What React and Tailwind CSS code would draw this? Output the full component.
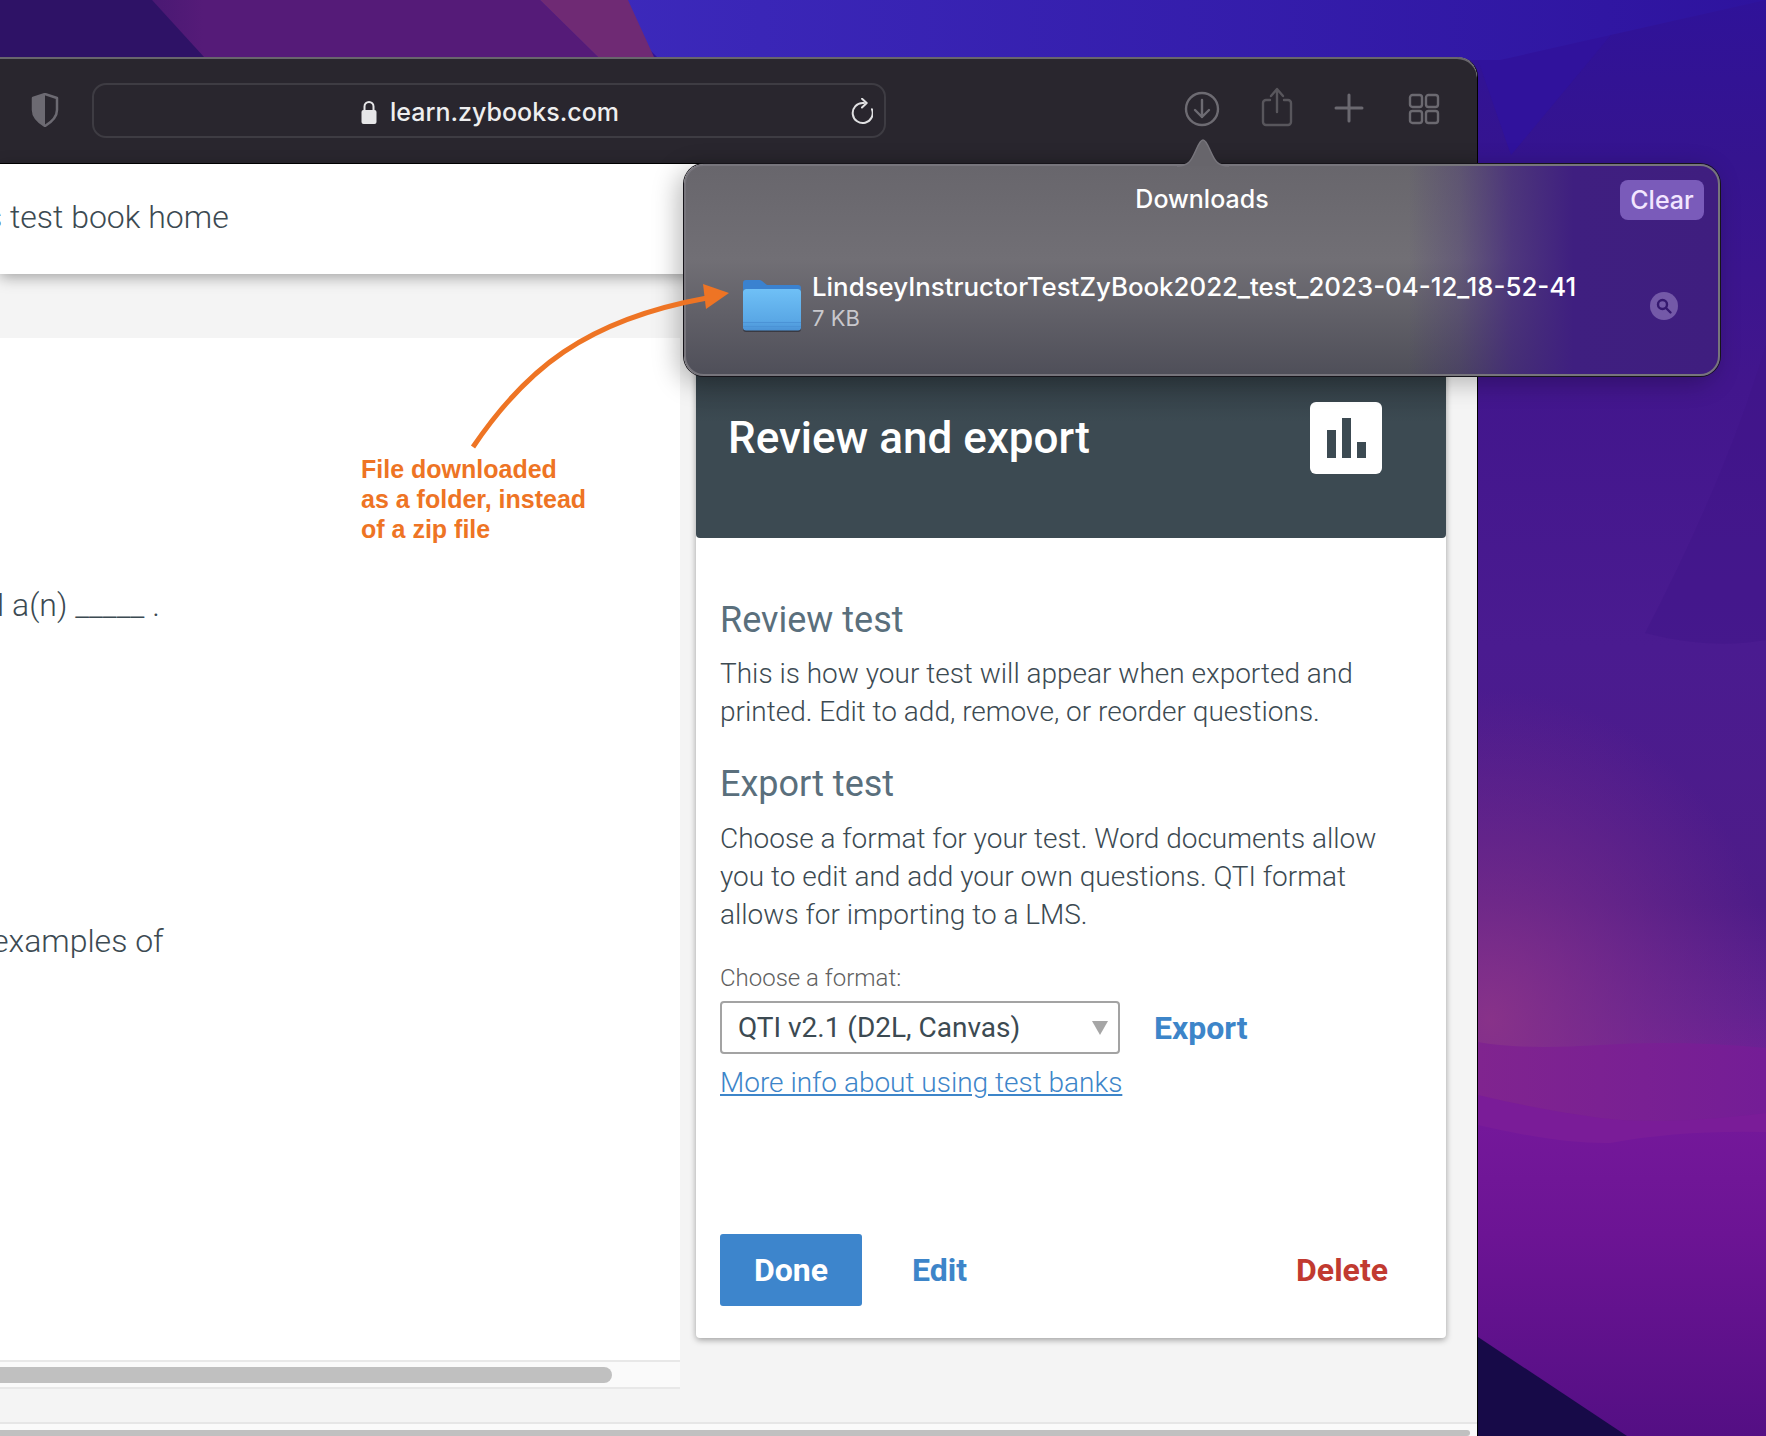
const roboto = "font-['Roboto',sans-serif]";

function Wallpaper() {
  return (
    <svg className="absolute inset-0" width="1766" height="1436" viewBox="0 0 1766 1436">
      <defs>
        <linearGradient id="base" x1="0" y1="0" x2="0" y2="1">
          <stop offset="0" stopColor="#2f1299" />
          <stop offset="0.11" stopColor="#35148f" />
          <stop offset="0.27" stopColor="#42168d" />
          <stop offset="0.45" stopColor="#4a1b90" />
          <stop offset="0.63" stopColor="#4e1c88" />
          <stop offset="0.7" stopColor="#5f2190" />
          <stop offset="0.74" stopColor="#6e2096" />
          <stop offset="1" stopColor="#6e2096" />
        </linearGradient>
        <linearGradient id="top" x1="0" y1="0" x2="1" y2="0">
          <stop offset="0" stopColor="#2d1164" />
          <stop offset="0.12" stopColor="#38156c" />
          <stop offset="0.34" stopColor="#551b78" />
        </linearGradient>
        <linearGradient id="blue" x1="0" y1="0" x2="1" y2="0">
          <stop offset="0" stopColor="#3c29bb" />
          <stop offset="1" stopColor="#2e139e" />
        </linearGradient>
        <linearGradient id="w1" x1="0" y1="0" x2="1" y2="0">
          <stop offset="0" stopColor="#80248f" />
          <stop offset="1" stopColor="#741d96" />
        </linearGradient>
        <linearGradient id="w3" x1="0" y1="0" x2="0" y2="1">
          <stop offset="0" stopColor="#74189a" />
          <stop offset="0.35" stopColor="#6c1494" />
          <stop offset="1" stopColor="#540f84" />
        </linearGradient>
        <radialGradient id="glow" cx="0.5" cy="0.5" r="0.5">
          <stop offset="0" stopColor="#8c3488" stopOpacity="0.9" />
          <stop offset="0.5" stopColor="#84308a" stopOpacity="0.45" />
          <stop offset="1" stopColor="#7e2e8a" stopOpacity="0" />
        </radialGradient>
      </defs>
      <rect width="1766" height="1436" fill="url(#base)" />
      <path d="M1640 0 L1511 155 L1478 60 L1400 0Z" fill="#30129c" />
      <path d="M1766 345 Q1725 480 1645 633 Q1710 650 1766 640 Z" fill="#3f1586" opacity="0.4" />
      <ellipse cx="1490" cy="1020" rx="290" ry="330" fill="url(#glow)" />
      <path d="M1478 1042 Q1520 1050 1600 1045 T1766 1048 V1436 H1478 Z" fill="url(#w1)" />
      <path d="M1478 1095 Q1540 1110 1600 1118 T1766 1113 V1436 H1478 Z" fill="#7a1c98" />
      <path d="M1478 1125 Q1560 1144 1610 1143 Q1680 1130 1766 1132 V1436 H1478 Z" fill="url(#w3)" />
      <path d="M600 0 H1766 V0 L1500 60 H660Z" fill="url(#blue)" />
      <path d="M0 0 H540 L598 57 H0 Z" fill="url(#top)" />
      <path d="M0 0 H152 L204 57 H0 Z" fill="#2e1266" />
      <path d="M540 0 H628 L654 57 H598 Z" fill="#6f2a74" />
      <path d="M1478 1337 L1627 1436 H1478 Z" fill="#170a48" />
    </svg>
  );
}

function Toolbar() {
  return (
    <div className="relative flex h-[107px] shrink-0 items-center rounded-tr-[20px] border-b border-black bg-[#29262e] shadow-[inset_0_2px_0_#68666c]">
      <svg className="ml-[31px] mr-[33px] shrink-0" width="28" height="34" viewBox="0 0 28 34">
        <path d="M14 1 L26 5 V17 C26 25 19 30 14 33 C9 30 2 25 2 17 V5 Z" fill="none" stroke="#6c6a72" strokeWidth="2.5" strokeLinejoin="round" />
        <path d="M14 1 L2 5 V17 C2 25 9 30 14 33 Z" fill="#6c6a72" />
      </svg>
      <div className="relative flex h-[55px] w-[794px] shrink-0 items-center justify-center rounded-[14px] border-2 border-[#3e3c43] pl-[2px]">
        <svg className="mr-[13px] mt-[4px]" width="16" height="24" viewBox="0 0 16 24">
          <path d="M3.5 11 V6.5 a4.5 4.5 0 0 1 9 0 V11" fill="none" stroke="#e6e6e8" strokeWidth="2" />
          <rect x="0.5" y="10" width="15" height="14" rx="2" fill="#e6e6e8" />
        </svg>
        <span className="mt-[3px] font-['Inter',sans-serif] text-[25px] font-medium leading-[34px] text-[#eeeeef]">learn.zybooks.com</span>
        <svg className="absolute right-[11px] top-[13px]" width="24" height="27" viewBox="0 0 24 27" fill="none" stroke="#e0e0e2" strokeWidth="2" strokeLinecap="round" strokeLinejoin="round">
          <path d="M15 5 H13.7 A10 10 0 1 0 23 11.3" />
          <path d="M13 0.8 L17.7 5 L13 9.5" />
        </svg>
      </div>
      <svg className="absolute left-[1184px] top-[34px]" width="36" height="36" viewBox="0 0 36 36" fill="none" stroke="#6d6b72" strokeWidth="2.4" strokeLinecap="round" strokeLinejoin="round">
        <circle cx="18" cy="18" r="16" />
        <path d="M18 9 V26 M11 19 L18 26 L25 19" />
      </svg>
      <svg className="absolute left-[1260px] top-[30px]" width="34" height="40" viewBox="0 0 34 40" fill="none" stroke="#58565c" strokeWidth="2.4" strokeLinecap="round" strokeLinejoin="round">
        <path d="M10 13 H6 a3 3 0 0 0 -3 3 V35 a3 3 0 0 0 3 3 H28 a3 3 0 0 0 3 -3 V16 a3 3 0 0 0 -3 -3 H24" />
        <path d="M17 25 V3 M11 9 L17 2 L23 9" />
      </svg>
      <svg className="absolute left-[1334px] top-[36px]" width="30" height="30" viewBox="0 0 30 30" fill="none" stroke="#6b6970" strokeWidth="3" strokeLinecap="round">
        <path d="M15 2 V28 M2 15 H28" />
      </svg>
      <svg className="absolute left-[1408px] top-[36px]" width="32" height="32" viewBox="0 0 32 32" fill="none" stroke="#6b6970" strokeWidth="2.4">
        <rect x="2" y="2" width="12" height="12" rx="2.5" />
        <rect x="18" y="2" width="12" height="12" rx="2.5" />
        <rect x="2" y="18" width="12" height="12" rx="2.5" />
        <rect x="18" y="18" width="12" height="12" rx="2.5" />
      </svg>
    </div>
  );
}

function Popover() {
  return (
    <div className="absolute left-[684px] top-[164px] h-[212px] w-[1036px] rounded-[20px] border-2 border-[#77757c] bg-[linear-gradient(90deg,rgba(62,31,128,0)_70%,rgba(62,31,128,0.25)_75%,rgba(64,32,128,0.7)_80%,#3f1f80_86%,#3f1e7f_100%),linear-gradient(180deg,#68666c_0%,#716f75_45%,#4f4f59_100%)] shadow-[0_0_0_1px_#16141a,-6px_6px_26px_rgba(0,0,0,0.28)]">
      <svg className="absolute left-[491px] top-[-27px]" width="52" height="28" viewBox="0 0 52 28">
        <path d="M0 27 C12 27 14 22 19 11 C22 4 24 1 26 1 C28 1 30 4 33 11 C38 22 40 27 52 27 Z" fill="#67656b" />
        <path d="M0 27 C12 27 14 22 19 11 C22 4 24 1 26 1 C28 1 30 4 33 11 C38 22 40 27 52 27" fill="none" stroke="#77757c" strokeWidth="1.5" />
      </svg>
      <p className="absolute inset-x-0 top-[17px] text-center font-['Inter',sans-serif] text-[25px] font-medium leading-[32px] text-white">Downloads</p>
      <button className="absolute right-[14px] top-[14px] h-[40px] w-[84px] rounded-[8px] bg-[#7a5bba] font-['Inter',sans-serif] text-[25px] font-medium leading-[40px] text-[#f2e6ff]">Clear</button>
      <svg className="absolute left-[56px] top-[113px]" width="60" height="54" viewBox="0 0 60 54">
        <defs>
          <linearGradient id="fold" x1="0" y1="0" x2="0" y2="1">
            <stop offset="0" stopColor="#6fc0f6" />
            <stop offset="0.75" stopColor="#5aa8e6" />
            <stop offset="1" stopColor="#4b93d6" />
          </linearGradient>
        </defs>
        <path d="M1 4 a3 3 0 0 1 3 -3 H17 a4 4 0 0 1 3 1 L25 6 H56 a3 3 0 0 1 3 3 V20 H1 Z" fill="#3a82d0" />
        <rect x="1" y="10" width="58" height="43" rx="3" fill="#3a3a42" />
        <rect x="1" y="10" width="58" height="41.5" rx="3" fill="url(#fold)" />
        <rect x="1" y="43" width="58" height="1" fill="#4b93d6" />
        <rect x="1" y="47" width="58" height="1" fill="#4b93d6" />
      </svg>
      <p className="absolute left-[126px] top-[104px] whitespace-nowrap font-['Inter',sans-serif] text-[25.85px] font-medium leading-[34px] text-white">LindseyInstructorTestZyBook2022_test_2023-04-12_18-52-41</p>
      <p className="absolute left-[126px] top-[137px] font-['Inter',sans-serif] text-[22px] leading-[30px] text-[#c9c8cd]">7 KB</p>
      <div className="absolute left-[964px] top-[126px] flex h-[28px] w-[28px] items-center justify-center rounded-full bg-[#7459a8]">
        <svg width="18" height="18" viewBox="0 0 18 18" fill="none" stroke="#35186f" strokeWidth="2.4" strokeLinecap="round">
          <circle cx="7.5" cy="7.5" r="4.5" />
          <path d="M11 11 L15.5 15.5" />
        </svg>
      </div>
    </div>
  );
}

function Card() {
  return (
    <div className={`ml-[16px] mt-[64px] h-[1000px] w-[750px] shrink-0 rounded-[4px] bg-white shadow-[0_2px_6px_rgba(0,0,0,0.35)] ${roboto}`}>
      <div className="flex h-[200px] items-center justify-between rounded-[4px] bg-[linear-gradient(180deg,#323e45_0%,#323e45_20%,#3c4a52_42%,#3c4a52_100%)] pl-[32px] pr-[64px]">
        <h1 className="text-[44px] font-medium leading-[52px] text-white">Review and export</h1>
        <div className="flex h-[72px] w-[72px] items-center justify-center rounded-[6px] bg-white">
          <svg width="40" height="40" viewBox="0 0 40 40" fill="#3c4a52">
            <rect x="1" y="12" width="9" height="28" />
            <rect x="16" y="0" width="9" height="40" />
            <rect x="31" y="24" width="9" height="16" />
          </svg>
        </div>
      </div>
      <div className="px-[24px] pt-[60px]">
        <h2 className="text-[36px] font-normal leading-[44px] text-[#5a6f7c]">Review test</h2>
        <p className="mt-[13px] text-[28px] font-light leading-[38px] text-[#3c4a52]">This is how your test will appear when exported and printed. Edit to add, remove, or reorder questions.</p>
        <h2 className="mt-[31px] text-[36px] font-normal leading-[44px] text-[#5a6f7c]">Export test</h2>
        <p className="mt-[14px] w-[680px] text-[28px] font-light leading-[38px] text-[#3c4a52]">Choose a format for your test. Word documents allow you to edit and add your own questions. QTI format allows for importing to a LMS.</p>
        <p className="mt-[28px] text-[24px] font-light leading-[32px] text-[#5f5f5f]">Choose a format:</p>
        <div className="mt-[7px] flex items-center">
          <div className="flex h-[53px] w-[400px] items-center justify-between rounded-[4px] border-2 border-[#a3a3a3] pl-[16px] pr-[10px] text-[28px] leading-[38px] text-[#3c4a52]">
            <span>QTI v2.1 (D2L, Canvas)</span>
            <svg width="16" height="14" viewBox="0 0 16 14"><path d="M0 0 H16 L8 14 Z" fill="#a6a6a6" /></svg>
          </div>
          <span className="ml-[34px] text-[32px] font-bold leading-[40px] text-[#3d85c9]">Export</span>
        </div>
        <a className="mt-[10px] block text-[28px] leading-[38px] font-light text-[#3d85c9] underline">More info about using test banks</a>
        <div className="mt-[132px] flex items-center">
          <button className="h-[72px] w-[142px] rounded-[3px] bg-[#3d85cc] text-[32px] font-bold leading-[72px] text-white">Done</button>
          <span className="ml-[50px] text-[32px] font-bold leading-[40px] text-[#3d85c9]">Edit</span>
          <span className="ml-auto mr-[34px] text-[32px] font-bold leading-[40px] text-[#c13a30]">Delete</span>
        </div>
      </div>
    </div>
  );
}

function LeftPanel() {
  return (
    <div className="w-[680px] shrink-0">
      <div className={`mt-[64px] h-[1022px] overflow-hidden bg-white text-[32px] font-light leading-[42px] text-[#3c4a52] ${roboto}`}>
        <p className="-ml-[3px] mt-[246px] whitespace-nowrap">l a(n) _____ .</p>
        <p className="-ml-[8px] mt-[294px] whitespace-nowrap">examples of</p>
      </div>
      <div className="flex h-[29px] items-center border-y-2 border-[#e8e8e8] bg-[#fafafa]">
        <div className="h-[16px] w-[612px] rounded-r-[8px] bg-[#c0c0c0]" />
      </div>
    </div>
  );
}

export default function App() {
  return (
    <div className="relative h-[1436px] w-[1766px] overflow-hidden bg-[#3f1789] pt-[57px]">
      <Wallpaper />
      <div className="relative flex h-[1379px] w-[1478px] flex-col overflow-hidden rounded-tr-[20px] border-r border-black bg-[#f4f4f4]">
        <Toolbar />
        <div className="relative min-h-0 flex-1">
          <div className={`h-[110px] overflow-hidden bg-white text-[32px] font-light leading-[42px] text-[#3c4a52] shadow-[0_3px_14px_rgba(0,0,0,0.35)] ${roboto}`}>
            <p className="-ml-[14px] pt-[32px] whitespace-nowrap">s test book home</p>
          </div>
          <div className="flex">
            <LeftPanel />
            <Card />
          </div>
          <div className="absolute inset-x-0 bottom-0 h-[14px] border-t-2 border-[#e6e6e6] bg-[#fafafa]">
            <div className="mt-[6px] h-[6px] w-[1470px] rounded-r-[4px] bg-[#c0c0c0]" />
          </div>
        </div>
      </div>
      <Popover />
      <svg className="absolute left-[465px] top-[280px]" width="280" height="175" viewBox="0 0 280 175">
        <path d="M8 167 C60 90 120 40 242 18" fill="none" stroke="#ee7424" strokeWidth="5" />
        <path d="M238 4 L241 29 L264 13 Z" fill="#ee7424" />
      </svg>
      <p className="absolute left-[361px] top-[453.5px] w-[260px] font-['Liberation_Sans',sans-serif] text-[25px] font-bold leading-[30px] text-[#ee7424]">File downloaded<br />as a folder, instead<br />of a zip file</p>
    </div>
  );
}
